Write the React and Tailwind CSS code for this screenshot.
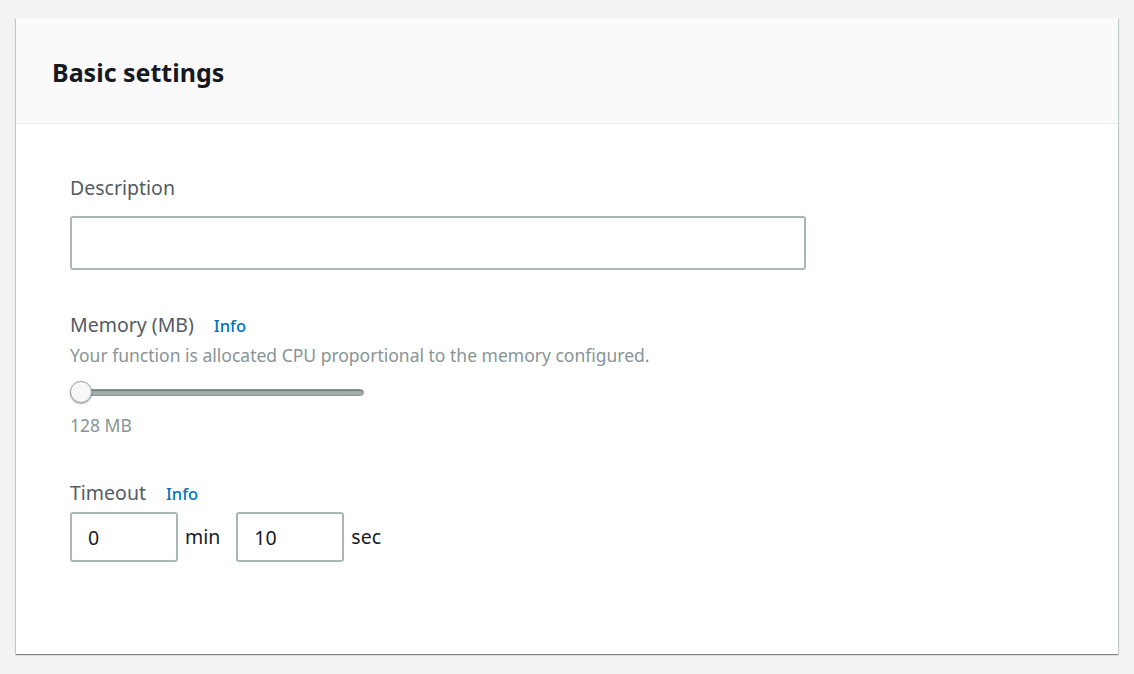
export default function App() {
  return (
    <div className="min-h-[674px] bg-[#f2f3f3] px-4 pt-[18px] pb-5" style={{ fontFamily: '"Noto Sans", "Open Sans", sans-serif' }}>
      <div className="bg-white shadow-[0_1px_1px_0_rgba(0,28,36,0.3),1px_1px_1px_0_rgba(0,28,36,0.15),-1px_1px_1px_0_rgba(0,28,36,0.15)]">
        <div className="h-[106px] bg-[#fafafa] border-b border-[#eaeded] flex items-center px-9">
          <h2 className="text-[25px] font-bold text-[#16191f] pt-1">Basic settings</h2>
        </div>
        <div className="px-[54px] pt-[52px] pb-[92px]">
          <label className="block text-[19.5px] text-[#545b64] leading-6">Description</label>
          <input className="mt-4 block w-[736px] h-[54px] border-2 border-[#aab7b8] rounded-[3px] px-3 outline-none" />

          <div className="mt-[43px] flex items-baseline gap-[20px]">
            <span className="text-[19.5px] text-[#545b64] leading-6">Memory (MB)</span>
            <a className="text-[16.5px] leading-6 font-medium text-[#0073bb]">Info</a>
          </div>
          <p className="mt-[7px] text-[17.5px] text-[#879596] leading-5">Your function is allocated CPU proportional to the memory configured.</p>
          <div className="relative mt-[16px] w-[294px] h-[22px] flex items-center">
            <div className="w-full h-[7px] rounded-full bg-[#a4adae] border border-[#8b9495] shadow-[inset_0_1px_1px_rgba(0,0,0,0.3)]" />
            <div className="absolute left-0 top-0 w-[22px] h-[22px] rounded-full bg-[#f7f7f7] border border-[#9ba5a6] shadow-[0_1px_2px_rgba(0,0,0,0.3)]" />
          </div>
          <p className="mt-[12px] text-[17.5px] text-[#879596] leading-5">128 MB</p>

          <div className="mt-[46px] flex items-baseline gap-[20px]">
            <span className="text-[19.5px] text-[#545b64] leading-6">Timeout</span>
            <a className="text-[16.5px] leading-6 font-medium text-[#0073bb]">Info</a>
          </div>
          <div className="mt-[6px] flex items-center">
            <input defaultValue="0" className="w-[108px] h-[50px] border-2 border-[#aab7b8] rounded-[3px] px-4 text-[19.5px] text-[#16191f] outline-none" />
            <span className="ml-[7px] mr-[16px] text-[19.5px] text-[#16191f]">min</span>
            <input defaultValue="10" className="w-[108px] h-[50px] border-2 border-[#aab7b8] rounded-[3px] px-4 text-[19.5px] text-[#16191f] outline-none" />
            <span className="ml-[7px] text-[19.5px] text-[#16191f]">sec</span>
          </div>
        </div>
      </div>
    </div>
  )
}
